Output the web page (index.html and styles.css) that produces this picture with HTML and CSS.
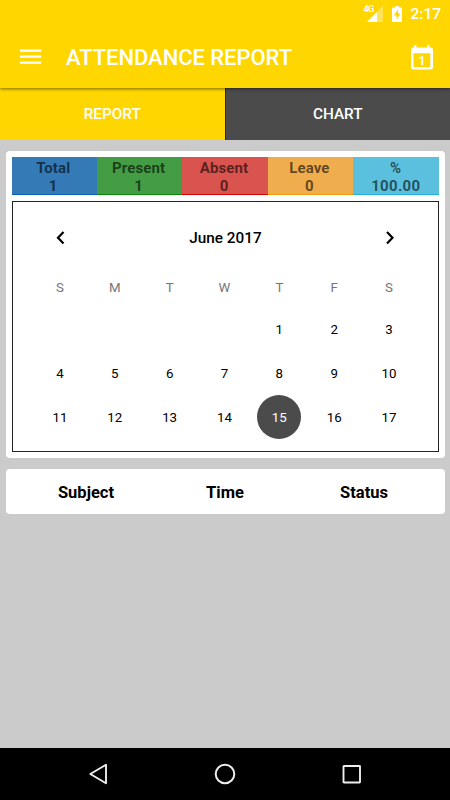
FILE: index.html
```html
<!DOCTYPE html>
<html lang="en">
<head>
    <meta charset="UTF-8">
    <title>Attendance Report</title>
    <link rel="stylesheet" href="styles.css">
</head>
<body>
    <header class="appbar">
        <div class="statusbar">
            <div class="signal">
                <span>4G</span>
                <svg width="16" height="16" viewBox="0 0 16 16">
                    <path d="M16 0v16H0z" fill="#fff" opacity=".35"/>
                    <path d="M10 6v10H0z" fill="#fff"/>
                </svg>
            </div>
            <svg class="battery" width="10" height="16" viewBox="0 0 10 16">
                <path d="M3 0h4v1.5h2q1 0 1 1V15q0 1-1 1H1q-1 0-1-1V2.500q0-1 1-1h2z" fill="#fff"/>
                <path d="M6 3.500L1.800 9.500h2.700v4L8.400 7.500H6z" fill="#ffd600"/>
            </svg>
            <span class="clock">2:17</span>
        </div>
        <div class="toolbar">
            <svg width="22" height="16" viewBox="0 0 22 16">
                <path d="M0 1.700h21.200M0 7.700h21.200M0 13.700h21.200" stroke="#fff" stroke-width="2.300"/>
            </svg>
            <h1>ATTENDANCE REPORT</h1>
            <div class="date-icon">
                <svg width="24" height="26" viewBox="0 0 24 26">
                    <path d="M4 1h2.500v2.500h10.500V1h2.500v2.500h1q2.500 0 2.500 2.500v17q0 2.500-2.500 2.500h-17Q1 25.500 1 23V6q0-2.500 2.500-2.500H4zM3.500 9.300v13.700h16.800V9.300z" fill="#fff" fill-rule="evenodd"/>
                </svg>
                <span>1</span>
            </div>
        </div>
    </header>

    <nav class="tabs">
        <div class="tab">REPORT</div>
        <div class="tab dark">CHART</div>
    </nav>

    <main>
        <section class="card">
            <div class="stats">
                <div class="total">Total<br>1</div>
                <div class="present">Present<br>1</div>
                <div class="absent">Absent<br>0</div>
                <div class="leave">Leave<br>0</div>
                <div class="percent">%<br>100.00</div>
            </div>
            <div class="calendar">
                <div class="month">
                    <svg width="9" height="14" viewBox="0 0 9 14"><path d="M7.500 1L2 6.700L7.500 12.400" fill="none" stroke="#000" stroke-width="2.200"/></svg>
                    <span>June 2017</span>
                    <svg width="9" height="14" viewBox="0 0 9 14"><path d="M1 1l5.500 5.700L1 12.400" fill="none" stroke="#000" stroke-width="2.200"/></svg>
                </div>
                <div class="weekdays">
                    <span>S</span><span>M</span><span>T</span><span>W</span><span>T</span><span>F</span><span>S</span>
                </div>
                <div class="days">
                    <span></span><span></span><span></span><span></span><span>1</span><span>2</span><span>3</span>
                    <span>4</span><span>5</span><span>6</span><span>7</span><span>8</span><span>9</span><span>10</span>
                    <span>11</span><span>12</span><span>13</span><span>14</span><span class="today">15</span><span>16</span><span>17</span>
                </div>
            </div>
        </section>

        <section class="card list-head">
            <span>Subject</span>
            <span>Time</span>
            <span>Status</span>
        </section>
    </main>

    <footer class="navbar">
        <svg width="22" height="22" viewBox="0 0 22 22"><path d="M18 1.800v18.400L2.300 11z" fill="none" stroke="#eee" stroke-width="1.900" stroke-linejoin="round"/></svg>
        <svg width="22" height="22" viewBox="0 0 22 22"><circle cx="11" cy="11" r="9.300" fill="none" stroke="#eee" stroke-width="2"/></svg>
        <svg width="22" height="22" viewBox="0 0 22 22"><rect x="3.500" y="3" width="16.500" height="16.500" rx=".5" fill="none" stroke="#eee" stroke-width="1.900"/></svg>
    </footer>
</body>
</html>
```

FILE: styles.css
```css
* { box-sizing: border-box; }
body { margin: 0; height: 800px; display: flex; flex-direction: column; background: #cbcbcb; font-family: Roboto, sans-serif; color: #000; overflow: hidden; }
svg { display: block; flex: none; }

.appbar { position: relative; height: 88px; background: #ffd600; color: #fff; box-shadow: 0 1px 3px rgba(0,0,0,.5); }
.statusbar { height: 28px; display: flex; justify-content: flex-end; align-items: center; padding: 0 9px 1px 0; }
.signal { position: relative; margin-right: 9px; }
.signal span { position: absolute; left: -4px; top: -1px; font-size: 9px; line-height: 9px; font-weight: 500; background: #ffd600; letter-spacing: -.6px; }
.battery { margin-right: 8px; }
.clock { font-size: 15.500px; font-weight: 500; line-height: 18px; }
.toolbar { height: 60px; display: flex; align-items: center; padding: 0 16px 3px 20px; }
.toolbar h1 { flex: 1; margin: 0 0 0 24px; padding-top: 3px; font-size: 22px; font-weight: 500; line-height: 26px; letter-spacing: -.05px; }
.date-icon { position: relative; }
.date-icon span { position: absolute; left: 0; top: 10px; width: 24px; text-align: center; font-size: 12px; line-height: 14px; font-weight: 700; }

.tabs { height: 51.500px; display: flex; }
.tab { flex: 1; display: flex; align-items: center; justify-content: center; background: #ffd600; color: #fff; font-size: 15.300px; font-weight: 500; }
.dark { background: #4b4b4b; border-left: 1px solid #172650; }

main { flex: 1; padding: 11.500px 5.500px; }
.card { background: #fff; border-radius: 4px; }
.card + .card { margin-top: 11px; }
.card:first-child { height: 307px; padding: 6px; }
.stats { display: grid; grid-template-columns: repeat(5, 1fr); height: 38px; font-size: 15px; font-weight: 700; text-align: center; letter-spacing: .1px; color: rgba(0,0,0,.6); }
.stats div { height: 38px; border-bottom-width: 1px; border-bottom-style: solid; padding: 2px 2px 0 0; line-height: 18px; }
.stats .percent { padding-right: 0; letter-spacing: .3px; }
.total { background: #337ab7; border-color: #0861b4; }
.present { background: #449d44; border-color: #088b08; }
.absent { background: #d9534f; border-color: #d30000; }
.leave { background: #f0ad4e; border-color: #f59b0b; }
.percent { background: #5bc0de; border-color: #20b4df; }

.calendar { height: 251px; margin-top: 6px; border: 1px solid #222; padding: 14px 21px 0 20px; }
.month { height: 44px; display: flex; align-items: center; justify-content: space-between; padding: 0 21px 0 23px; font-size: 15.300px; font-weight: 500; }
.weekdays, .days { display: grid; grid-template-columns: repeat(7, 1fr); justify-items: center; text-align: center; }
.weekdays { height: 48px; align-items: center; margin-top: 3px; font-size: 13.300px; color: #757575; }
.days { grid-auto-rows: 44px; margin-top: -4px; font-size: 13.300px; }
.days span { width: 44px; height: 44px; line-height: 46px; }
.days .today { background: #4b4b4b; border-radius: 50%; color: #fff; }

.list-head { display: flex; height: 45px; align-items: center; padding: 1px 11px 0; font-size: 16.500px; font-weight: 700; }
.list-head span { flex: 1; text-align: center; }

.navbar { height: 52px; display: flex; align-items: center; justify-content: space-between; padding: 0 88px; background: #000; }
```
